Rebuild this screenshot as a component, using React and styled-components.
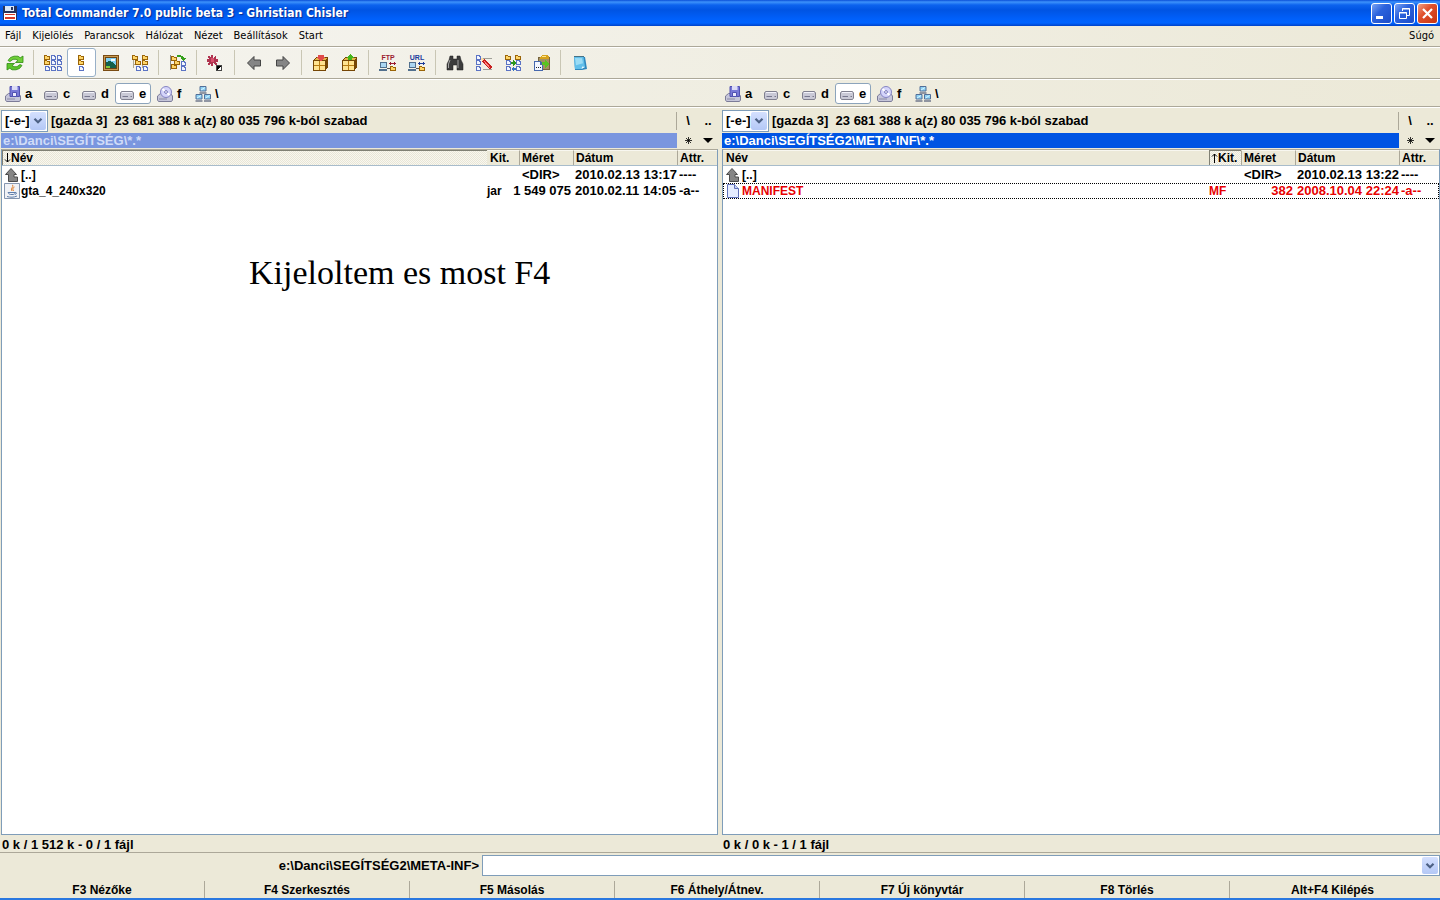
import React from "react";
import styled, { createGlobalStyle } from "styled-components";

const GlobalStyle = createGlobalStyle`
  * {
    box-sizing: border-box;
  }

  body {
    margin: 0;
    background: #ece9d8;
    color: #000;
    font-family: "Liberation Sans", Arial, sans-serif;
    font-size: 13px;
    font-weight: bold;
    line-height: 16px;
  }

  button, input, select {
    margin: 0;
    padding: 0;
    border: 0;
    background: none;
    color: inherit;
    font: inherit;
  }

  svg {
    display: block;
    flex: none;
  }
`;

const Window = styled.div`
  display: flex;
  flex-direction: column;
  min-height: 100vh;
  border-bottom: 2px solid #2a78e0;
`;

const TitleBar = styled.header`
  display: flex;
  align-items: center;
  height: 26px;
  padding: 0 2px;
  background: linear-gradient(
    #0a4fd8 0,
    #3d92fb 2px,
    #0c63ee 5px,
    #0054e3 10px,
    #0060fb 19px,
    #0064ff 23px,
    #0042c8 26px
  );
`;

const Title = styled.h1`
  flex: 1;
  margin: 0 0 0 4px;
  color: #fff;
  font-family: "DejaVu Sans Condensed", "DejaVu Sans", sans-serif;
  font-size: 12px;
  font-weight: bold;
  text-shadow: 1px 1px 1px #0a2a90;
`;

const WindowButtons = styled.div`
  display: flex;
  gap: 2px;
`;

const WindowButton = styled.button`
  width: 21px;
  height: 21px;
  border: 1px solid #fff;
  border-radius: 3px;
  background: ${(props) =>
    props.$close
      ? "linear-gradient(135deg, #f0a084, #e0502c 40%, #c83410)"
      : "linear-gradient(135deg, #7ba4f4, #2c63dd 40%, #1c4cc8)"};
`;

const MenuBar = styled.nav`
  display: flex;
  height: 21px;
  padding: 0 6px 0 5px;
  gap: 11px;
  border-bottom: 1px solid #aca899;
  background: linear-gradient(90deg, #f6f5f1, #ece9d8);
`;

const MenuItem = styled.button`
  font-family: "DejaVu Sans Condensed", "DejaVu Sans", sans-serif;
  font-size: 11px;
  font-weight: normal;
  line-height: 18px;

  &:last-child {
    margin-left: auto;
  }
`;

const ToolBar = styled.div`
  display: flex;
  height: 32px;
  border-top: 1px solid #fff;
  border-bottom: 1px solid #aca899;
  background: linear-gradient(90deg, #f5f4ef, #ece9d8);
`;

const ToolButton = styled.button`
  display: flex;
  align-items: center;
  justify-content: center;
  width: 29px;
  height: 29px;
  border: 1px solid ${(props) => (props.$active ? "#98b0c8" : "transparent")};
  border-radius: 3px;
  background: ${(props) => (props.$active ? "#fff" : "none")};
`;

const Separator = styled.span`
  width: 1px;
  height: 25px;
  margin: 2px 4px;
  background: #c9c6b4;
`;

const DriveBars = styled.div`
  display: flex;
  height: 28px;
  border-top: 1px solid #fff;
  border-bottom: 1px solid #aca899;
  background: linear-gradient(90deg, #f3f2eb, #ece9d8);
`;

const DriveBar = styled.div`
  display: flex;
  flex: 1;
  align-items: center;
  gap: 2px;
  padding: 1px 1px 0;
`;

const DriveButton = styled.button`
  display: flex;
  align-items: center;
  gap: 4px;
  width: 36px;
  height: 21px;
  padding: 0 3px;
  border: 1px solid ${(props) => (props.$active ? "#8ca4bc" : "transparent")};
  border-radius: 3px;
  background: ${(props) => (props.$active ? "#fff" : "none")};
`;

const Panels = styled.main`
  display: grid;
  grid-template-columns: 1fr 1fr;
  flex: 1;
  padding-top: 2px;
  border-top: 1px solid #fff;
`;

const PanelBox = styled.section`
  display: flex;
  flex-direction: column;
  min-width: 0;
  padding: ${(props) => (props.$side === "left" ? "0 2px 0 1px" : "0 0 0 2px")};
`;

const InfoRow = styled.div`
  display: flex;
  align-items: center;
  height: 22px;
`;

const DriveSelect = styled.span`
  position: relative;
  display: flex;
  width: 47px;
  height: 22px;
  margin-right: 3px;
  border: 1px solid #7f9db9;
  background: #fff;

  select {
    width: 100%;
    padding-left: 3px;
    appearance: none;
    outline: none;
  }
`;

const Arrow = styled.span`
  display: flex;
  align-items: center;
  justify-content: center;
  width: 16px;
  border-radius: 2px;
  background: linear-gradient(#d4e0fe, #b4c8f6);

  ${DriveSelect} & {
    position: absolute;
    top: 1px;
    right: 1px;
    bottom: 1px;
    pointer-events: none;
  }
`;

const FreeSpace = styled.span`
  flex: 1;
  white-space: pre;
`;

const SmallButton = styled.button`
  display: flex;
  align-items: center;
  justify-content: center;
  width: 20px;
  height: 18px;
`;

const Divider = styled.span`
  width: 1px;
  height: 18px;
  margin-right: 1px;
  background: #aca899;
`;

const PathRow = styled.div`
  display: flex;
  align-items: center;
  height: 17px;
`;

const Path = styled.div`
  flex: 1;
  height: 15px;
  margin-right: 1px;
  padding-left: 2px;
  background: ${(props) => (props.$active ? "#0054e3" : "#7a96df")};
  color: ${(props) => (props.$active ? "#fff" : "#d0dcf8")};
  line-height: 15px;
`;

const List = styled.div`
  flex: 1;
  border: 1px solid #7f9db9;
  border-top-color: #aca899;
  background: #fff;
`;

const FileTable = styled.table`
  width: 100%;
  border-collapse: collapse;
  table-layout: fixed;

  th, td {
    padding: 0;
    text-align: left;
    white-space: nowrap;
  }

  thead {
    border-bottom: 1px solid #a8bccb;
    background: #ece9d8;
  }

  tbody::before {
    display: block;
    height: 1px;
    content: "";
  }
`;

const Column = styled.col`
  width: ${(props) => props.$width || "auto"};
`;

const HeadButton = styled.button`
  display: flex;
  align-items: center;
  width: 100%;
  height: 15px;
  padding-left: ${(props) => (props.$sorted ? "1px" : "2px")};
  border-left: 1px solid
    ${(props) => (props.$sorted ? "#808074" : props.$line ? "#aca899" : "transparent")};
  border-top: 1px solid ${(props) => (props.$sorted ? "#808074" : "#f8f7f0")};
  background: ${(props) =>
    props.$sorted
      ? "repeating-conic-gradient(#f8f7f0 0 25%, #e9e6d6 0 50%) 0 0 / 2px 2px"
      : "none"};
  font-size: 12px;
`;

const FileRow = styled.tr`
  height: 16px;
  color: ${(props) => (props.$selected ? "#e60000" : "inherit")};
  outline: ${(props) => (props.$selected ? "1px dotted #000" : "none")};
  outline-offset: -1px;
`;

const Name = styled.div`
  display: flex;
  gap: 1px;
  padding-left: 2px;
  font-size: 12px;
`;

const Ext = styled.td`
  font-size: 12px;
`;

const Size = styled.div`
  display: flex;
  justify-content: ${(props) => (props.$folder ? "flex-start" : "flex-end")};
  padding: 0 2px 0 ${(props) => (props.$folder ? "3px" : "0")};
`;

const Padded = styled.td`
  && {
    padding-left: 2px;
  }
`;

const Status = styled.div`
  height: 17px;
  padding: 2px 1px 0;
`;

const Note = styled.p`
  position: absolute;
  top: 253px;
  left: 249px;
  margin: 0;
  font-family: "Liberation Serif", serif;
  font-size: 34px;
  font-weight: normal;
  line-height: 40px;
`;

const CommandRow = styled.form`
  display: grid;
  grid-template-columns: 1fr 2fr;
  gap: 3px;
  align-items: center;
  height: 26px;
  border-top: 1px solid #aca899;

  label {
    text-align: right;
  }
`;

const CommandBox = styled.div`
  display: flex;
  height: 21px;
  padding: 1px;
  border: 1px solid #7f9db9;
  background: #fff;

  input {
    flex: 1;
    outline: none;
  }

  button {
    display: flex;
  }
`;

const FunctionKeys = styled.footer`
  display: grid;
  grid-template-columns: repeat(7, 1fr);
  height: 20px;
  padding: 3px 5px 0 0;
`;

const FunctionKey = styled.button`
  border-right: 1px solid #aca899;
  font-size: 12px;

  &:last-child {
    border-right: 0;
  }
`;

/* pieces shared by the toolbar icons */

const Folder = ({ x, y }) => (
  <g transform={`translate(${x} ${y})`}>
    <path d="M0 0h3v1h3v4H0z" fill="#9a6408" />
    <path d="M1 1h2v1h2v2H1z" fill="#ffd668" />
  </g>
);

const Page = ({ x, y }) => (
  <g transform={`translate(${x} ${y})`}>
    <path d="M0 0h3l2 2v3H0z" fill="#5b73c4" />
    <path d="M1 1h2v1h1v2H1z" fill="#f2f6ff" />
  </g>
);

const Icon = ({ children, size = 18, smooth }) => (
  <svg
    width={size}
    height={size}
    viewBox={`0 0 ${size} ${size}`}
    shapeRendering={smooth ? "auto" : "crispEdges"}
    aria-hidden="true"
  >
    {children}
  </svg>
);

const Chevron = () => (
  <svg width="10" height="8" viewBox="0 0 10 8" aria-hidden="true">
    <path d="M1.5 1.8 5 5.3l3.5-3.5" fill="none" stroke="#4d6185" strokeWidth="2.2" />
  </svg>
);

const RefreshIcon = () => (
  <Icon smooth>
    <path
      d="M2 6.500 4.500 3.500 8 2.200h4l2.200 1.600L17 2v6.500H9.500l2.500-2-2-1.200H7L4 7.500z"
      fill="#6fd038"
      stroke="#2f8a12"
      strokeWidth=".8"
    />
    <path
      d="M16 11.500l-2.500 3L10 15.800H6l-2.200-1.600L1 16V9.500h7.500l-2.500 2 2 1.200h3l3-2.200z"
      fill="#5cc52c"
      stroke="#2f8a12"
      strokeWidth=".8"
    />
  </Icon>
);

const BriefIcon = () => (
  <Icon>
    <Folder x={0} y={1} />
    <Folder x={0} y={6} />
    <Page x={1} y={12} />
    {[7, 13].map((x) => [1, 6, 12].map((y) => <Page key={`${x}-${y}`} x={x} y={y} />))}
  </Icon>
);

const FullIcon = () => (
  <Icon>
    <Folder x={5} y={1} />
    <Folder x={5} y={6} />
    <Page x={6} y={12} />
  </Icon>
);

const ThumbsIcon = () => (
  <Icon>
    <path d="M1 1h16v16H1z" fill="#7a4c14" />
    <path d="M2 2h14v14H2z" fill="#c99a50" />
    <path d="M3 3h12v12H3z" fill="#6b4516" />
    <path d="M4 4h10v10H4z" fill="#7fd0f4" />
    <path d="M4 8l3-1 3 1 4 3v3H4z" fill="#14604c" />
    <path d="M9 5h4v2H9z" fill="#f4fcff" />
    <path d="M4 12h4v2H4z" fill="#7cc83c" />
  </Icon>
);

const TreeIcon = () => (
  <Icon>
    <path d="M2 5h1v9H2zM3 10h3v1H3zM11 5h1v9h-1zM12 13h2v1h-2z" fill="#b0a890" />
    <Folder x={1} y={1} />
    <Folder x={4} y={6} />
    <Folder x={11} y={1} />
    <Folder x={11} y={6} />
    <Page x={5} y={12} />
    <Page x={12} y={12} />
  </Icon>
);

const BranchIcon = () => (
  <Icon>
    <path d="M1 1h1v15H1z" fill="#8c8c84" />
    <Folder x={2} y={2} />
    <Folder x={5} y={6} />
    <Folder x={2} y={10} />
    <Page x={12} y={7} />
    <Page x={12} y={12} />
    <path d="M8 1h4v1h2v1h1v1h2l-3 3-3-3h1V3H8z" fill="#34a01c" />
  </Icon>
);

const InvertIcon = () => (
  <Icon>
    <path
      d="M4 1h2v3l2-2h1v2L8 5h3v3H8l2 2v1H8L6 9v3H4V9l-2 2H1V9l1-1H0V5h2L1 3V2h1l2 2z"
      fill="#b03450"
    />
    <path d="M4 4h3v4H4z" fill="#d8506c" />
    <path d="M9 11h6v6H9z" fill="#444" />
    <path d="M10 12h4v4h-4z" fill="#000" />
    <path d="M14 12v4h-4z" fill="#fff" />
  </Icon>
);

const ArrowIcon = ({ right }) => (
  <Icon smooth>
    <path
      d="M2.500 9 9 2.500V6h6.500v6H9v3.500z"
      fill="#858585"
      stroke="#454545"
      transform={right ? "translate(18 0) scale(-1 1)" : undefined}
    />
  </Icon>
);

const PackIcon = ({ unpack }) => (
  <Icon>
    <path d="M1 6l3-3h12v10l-2 3v1H1z" fill="#754606" />
    <path d="M4 4h11l-2 2H3z" fill="#e2b449" />
    <path d="M2 7h5v4H2zM8 7h5v4H8zM2 12h5v4H2zM8 12h5v4H8z" fill="#ffe390" />
    <path d="M7 7h1v9H7zM2 11h11v1H2z" fill="#b77c12" />
    {unpack ? (
      <path d="M9 0l4 4h-2v2H7V4H5z" fill="#45b51a" />
    ) : (
      <path d="M6 1h6v2h2l-5 4-5-4h2z" fill="#e14a4a" />
    )}
  </Icon>
);

const NetIcon = ({ label }) => (
  <Icon>
    <text
      x="9"
      y="6"
      textAnchor="middle"
      fontSize="7"
      fontWeight="bold"
      fill={label === "FTP" ? "#9c1c30" : "#1c3c9c"}
    >
      {label}
    </text>
    <path d="M1 8h7v6H1zM0 15h8v2H0z" fill="#52708e" />
    <path d="M2 9h5v4H2z" fill="#abd6f2" />
    <path d="M8 14h3v1H8z" fill="#545454" />
    <path d="M10 9h7v1h-7zM11 8h1v3h-1zM15 8h1v3h-1z" fill={label === "FTP" ? "#9c1c30" : "#1c3c9c"} />
    <Folder x={11} y={12} />
  </Icon>
);

const SearchIcon = () => (
  <Icon smooth>
    <path
      d="M4 2h3v3h4V2h3l1 4 2 4v6h-6v-5H7v5H1v-6l2-4z"
      fill="#3c3c3c"
      stroke="#1e1e1e"
      strokeWidth=".5"
    />
    <path d="M4 6 2.500 10v4M12 6v8" stroke="#a5a5a5" fill="none" />
  </Icon>
);

const RenameIcon = () => (
  <Icon>
    <Page x={1} y={1} />
    <Page x={1} y={6} />
    <Page x={1} y={12} />
    <path d="M8 4h9v1H8zM8 15h9v1H8z" fill="#a0a098" />
    <path d="M6 4l3 1 8 8-2 3-8-8z" fill="#c81e1e" />
    <path d="M6 4l3 1-2 3z" fill="#ffd8a0" />
    <path d="M9 7l6 7" stroke="#ff8880" />
  </Icon>
);

const SyncIcon = () => (
  <Icon>
    <Folder x={1} y={1} />
    <Folder x={11} y={1} />
    <Page x={2} y={6} />
    <Page x={12} y={6} />
    <Page x={2} y={12} />
    <Page x={12} y={12} />
    <path d="M7 8h2V6l3 3-3 3v-2H7z" fill="#2c961c" />
    <path d="M12 14h-2v-2l-3 3 3 3v-2h2z" fill="#3674c4" />
  </Icon>
);

const CopyNamesIcon = () => (
  <Icon>
    <path d="M5 3h12v13H5z" fill="#77643c" />
    <path d="M6 4h10v11H6z" fill="#a49161" />
    <path d="M7 3l2-2h5l2 2v2H7z" fill="#d6a21c" />
    <path d="M9 2h4v1H9z" fill="#ffe78c" />
    <path d="M1 7h6l3 3v7H1z" fill="#4668ae" />
    <path d="M2 8h5v3h2v5H2z" fill="#f2f6ff" />
    <path d="M3 13h1v1H3zM5 13h1v1H5zM7 13h1v1H7z" fill="#222" />
    <path d="M9 8h3V6l4 4-4 4v-3H9z" fill="#5ac321" />
  </Icon>
);

const NotepadIcon = () => (
  <Icon smooth>
    <path d="M3 2.500 14 3l2 12-5 1H4z" fill="#2e86bd" />
    <path d="M3 2.500 12.500 3 14 13l-3.500 2H4z" fill="#62bfea" />
    <path d="M4 4l7 .2 1 5-7 2z" fill="#9bdcf5" />
    <path d="M3 2.500h10" stroke="#477285" />
    <path d="M10.500 15l3.500-2-2.800-.5z" fill="#e8f8ff" />
  </Icon>
);

const DiskIcon = () => (
  <Icon size={16}>
    <path d="M1 1h13l1 1v13H1z" fill="#28345c" />
    <path d="M3 1h9v5H3z" fill="#dce8f8" />
    <path d="M9 2h2v3H9z" fill="#28345c" />
    <path d="M2 8h12v7H2z" fill="#fff" />
    <path d="M3 9h10v1H3zM3 12h10v2H3z" fill="#d83828" />
  </Icon>
);

const Drive = () => (
  <>
    <path d="M2.500 5.500h11l1 1.500v5l-1 1.500h-11l-1-1.500V7z" fill="#c9c9d6" stroke="#80808f" />
    <path d="M3 6.500h10" stroke="#f2f2fa" />
    <path d="M3.500 10.500H9" stroke="#77778e" />
    <path d="M11.500 10h1.500v1h-1.500z" fill="#7a7a8a" />
  </>
);

const LowDrive = () => (
  <>
    <path d="M3.500 7.500h10l2 2.500v4l-1 1.500h-13L.5 14v-4z" fill="#c6c6da" stroke="#7c7c98" />
    <path d="M2 13h8" stroke="#8a8aa4" />
  </>
);

const Monitor = ({ x, y }) => (
  <g transform={`translate(${x} ${y})`}>
    <path d="M0 0h6v4.500H0z" fill="#8cd2f5" stroke="#526f98" />
    <path d="M1 3.500l4-2.500" stroke="#d8f4ff" />
    <path d="M-.5 6.500h7" stroke="#70788c" strokeWidth="1.500" />
  </g>
);

const DriveIcon = ({ type }) => (
  <Icon size={16} smooth>
    {type === "disk" && <Drive />}
    {(type === "floppy" || type === "cd") && <LowDrive />}
    {type === "floppy" && (
      <>
        <path d="M5 .5h9.500v10H5z" fill="#7878d6" stroke="#5050b0" />
        <path d="M7 0h5.500v4H7z" fill="#dcdcf6" />
        <path d="M7.500 6.500h4v4h-4z" fill="#eceafe" stroke="#5050b0" />
      </>
    )}
    {type === "cd" && (
      <>
        <circle cx="9" cy="6" r="5.500" fill="#d4d4fa" stroke="#8484c2" />
        <path d="M9 6 5.500 3M9 6l3.500 3" stroke="#fff" strokeWidth="2" />
        <circle cx="9" cy="6" r="1.400" fill="#fff" stroke="#7474b8" />
      </>
    )}
    {type === "network" && (
      <>
        <Monitor x={5} y={0.5} />
        <Monitor x={1} y={8.5} />
        <Monitor x={9.5} y={8.5} />
      </>
    )}
  </Icon>
);

const FileIcon = ({ type }) => (
  <Icon size={16} smooth>
    {type === "up" && (
      <path d="M7 1.500 12.500 7.500H10V10h3.500v4.500H4.500v-7H1.500z" fill="#858585" stroke="#4c4c4c" />
    )}
    {type === "jar" && (
      <>
        <path d="M.5.5h15v15H.5z" fill="#f0f2f6" stroke="#8495ae" />
        <path d="M8 2c3 1-2 3 0 6M10.500 4c-2 1-2 2-1 4" fill="none" stroke="#df7b24" />
        <path d="M4 9.500h7c0 2-1 2-3 2s-3 0-4-2zM11 9.500c2-.5 2 1.500 0 2M3 13.500c3 1 7 1 10-.5" fill="none" stroke="#607eaa" />
      </>
    )}
    {type === "page" && (
      <>
        <path d="M2.500 1.500h7l4 4v9h-11z" fill="#e6edff" stroke="#6070b8" />
        <path d="M9.500 1.500v4h4" fill="#c5d2f4" stroke="#6070b8" />
      </>
    )}
  </Icon>
);

const menu = ["Fájl", "Kijelölés", "Parancsok", "Hálózat", "Nézet", "Beállítások", "Start", "Súgó"];

const tools = [
  [{ label: "Frissítés", icon: <RefreshIcon /> }],
  [
    { label: "Rövid", icon: <BriefIcon /> },
    { label: "Teljes", icon: <FullIcon />, active: true },
    { label: "Miniatűrök", icon: <ThumbsIcon /> },
    { label: "Fa", icon: <TreeIcon /> },
  ],
  [{ label: "Alkönyvtárak", icon: <BranchIcon /> }],
  [{ label: "Kijelölés megfordítása", icon: <InvertIcon /> }],
  [
    { label: "Vissza", icon: <ArrowIcon /> },
    { label: "Előre", icon: <ArrowIcon right /> },
  ],
  [
    { label: "Becsomagolás", icon: <PackIcon /> },
    { label: "Kicsomagolás", icon: <PackIcon unpack /> },
  ],
  [
    { label: "FTP kapcsolat", icon: <NetIcon label="FTP" /> },
    { label: "URL kapcsolat", icon: <NetIcon label="URL" /> },
  ],
  [
    { label: "Keresés", icon: <SearchIcon /> },
    { label: "Csoportos átnevezés", icon: <RenameIcon /> },
    { label: "Szinkronizálás", icon: <SyncIcon /> },
    { label: "Nevek másolása", icon: <CopyNamesIcon /> },
  ],
  [{ label: "Jegyzettömb", icon: <NotepadIcon /> }],
];

const drives = [
  { name: "a", type: "floppy" },
  { name: "c", type: "disk" },
  { name: "d", type: "disk" },
  { name: "e", type: "disk" },
  { name: "f", type: "cd" },
  { name: "\\", type: "network" },
];

const leftFiles = [
  { name: "[..]", icon: "up", size: "<DIR>", folder: true, date: "2010.02.13 13:17", attr: "----" },
  { name: "gta_4_240x320", icon: "jar", ext: "jar", size: "1 549 075", date: "2010.02.11 14:05", attr: "-a--" },
];

const rightFiles = [
  { name: "[..]", icon: "up", size: "<DIR>", folder: true, date: "2010.02.13 13:22", attr: "----" },
  { name: "MANIFEST", icon: "page", ext: "MF", size: "382", date: "2008.10.04 22:24", attr: "-a--", selected: true },
];

const functionKeys = [
  "F3 Nézőke",
  "F4 Szerkesztés",
  "F5 Másolás",
  "F6 Áthely/Átnev.",
  "F7 Új könyvtár",
  "F8 Törlés",
  "Alt+F4 Kilépés",
];

function Drives() {
  return (
    <DriveBar>
      {drives.map((drive) => (
        <DriveButton key={drive.name} $active={drive.name === "e"}>
          <DriveIcon type={drive.type} />
          {drive.name}
        </DriveButton>
      ))}
    </DriveBar>
  );
}

function Panel({ side, path, active, sort, files, status }) {
  const head = [
    { key: "name", label: "Név" },
    { key: "ext", label: "Kit." },
    { key: "size", label: "Méret", line: true },
    { key: "date", label: "Dátum", line: true },
    { key: "attr", label: "Attr.", line: true },
  ];

  return (
    <PanelBox $side={side}>
      <InfoRow>
        <DriveSelect>
          <select aria-label="Meghajtó" defaultValue="e">
            <option value="e">[-e-]</option>
          </select>
          <Arrow>
            <Chevron />
          </Arrow>
        </DriveSelect>
        <FreeSpace>{"[gazda 3]  23 681 388 k a(z) 80 035 796 k-ból szabad"}</FreeSpace>
        <Divider />
        <SmallButton>\</SmallButton>
        <SmallButton>..</SmallButton>
      </InfoRow>
      <PathRow>
        <Path $active={active}>{path}</Path>
        <SmallButton aria-label="Kedvencek">
          <svg width="7" height="7" viewBox="0 0 7 7">
            <path d="M3.500 0v7M0 3.500h7M1 1l5 5M6 1 1 6" stroke="#000" strokeWidth=".8" />
          </svg>
        </SmallButton>
        <SmallButton aria-label="Előzmények">
          <svg width="10" height="5" viewBox="0 0 10 5">
            <path d="M0 0h10L5 5z" />
          </svg>
        </SmallButton>
      </PathRow>
      <List>
        <FileTable>
          <colgroup>
            <Column />
            <Column $width="32px" />
            <Column $width="54px" />
            <Column $width="104px" />
            <Column $width="40px" />
          </colgroup>
          <thead>
            <tr>
              {head.map((col) => (
                <th key={col.key}>
                  <HeadButton $line={col.line} $sorted={sort.key === col.key}>
                    {sort.key === col.key && (
                      <svg width="7" height="10" viewBox="0 0 7 10">
                        <path
                          d={sort.up ? "M3.500 10V1M1 3.500 3.500 1 6 3.500" : "M3.500 0v9M1 6.500 3.500 9 6 6.500"}
                          fill="none"
                          stroke="#000"
                        />
                      </svg>
                    )}
                    {col.label}
                  </HeadButton>
                </th>
              ))}
            </tr>
          </thead>
          <tbody>
            {files.map((file) => (
              <FileRow key={file.name} $selected={file.selected}>
                <td>
                  <Name>
                    <FileIcon type={file.icon} />
                    {file.name}
                  </Name>
                </td>
                <Ext>{file.ext}</Ext>
                <td>
                  <Size $folder={file.folder}>
                    <span>{file.size}</span>
                  </Size>
                </td>
                <Padded>{file.date}</Padded>
                <Padded>{file.attr}</Padded>
              </FileRow>
            ))}
          </tbody>
        </FileTable>
      </List>
      <Status>{status}</Status>
    </PanelBox>
  );
}

function App() {
  return (
    <Window>
      <GlobalStyle />
      <TitleBar>
        <DiskIcon />
        <Title>Total Commander 7.0 public beta 3 - Ghristian Chisler</Title>
        <WindowButtons>
          <WindowButton aria-label="Kis méret">
            <svg width="19" height="19" viewBox="0 0 19 19">
              <path d="M4 12h7v3H4z" fill="#fff" />
            </svg>
          </WindowButton>
          <WindowButton aria-label="Előző méret">
            <svg width="19" height="19" viewBox="0 0 19 19" fill="none" stroke="#fff">
              <path d="M7.500 7V4.500h7v7H12M7 5h8M4.500 8.500h7v6h-7zM4 9h8" />
            </svg>
          </WindowButton>
          <WindowButton $close aria-label="Bezárás">
            <svg width="19" height="19" viewBox="0 0 19 19">
              <path d="M5 5l9 9M14 5l-9 9" stroke="#fff" strokeWidth="2.200" />
            </svg>
          </WindowButton>
        </WindowButtons>
      </TitleBar>
      <MenuBar>
        {menu.map((item) => (
          <MenuItem key={item}>{item}</MenuItem>
        ))}
      </MenuBar>
      <ToolBar>
        {tools.map((group, i) => (
          <React.Fragment key={i}>
            {i > 0 && <Separator />}
            {group.map((tool) => (
              <ToolButton key={tool.label} $active={tool.active} aria-label={tool.label}>
                {tool.icon}
              </ToolButton>
            ))}
          </React.Fragment>
        ))}
      </ToolBar>
      <DriveBars>
        <Drives />
        <Drives />
      </DriveBars>
      <Panels>
        <Panel
          side="left"
          path={"e:\\Danci\\SEGÍTSÉG\\*.*"}
          sort={{ key: "name" }}
          files={leftFiles}
          status="0 k / 1 512 k - 0 / 1 fájl"
        />
        <Panel
          side="right"
          active
          path={"e:\\Danci\\SEGÍTSÉG2\\META-INF\\*.*"}
          sort={{ key: "ext", up: true }}
          files={rightFiles}
          status="0 k / 0 k - 1 / 1 fájl"
        />
      </Panels>
      <Note>Kijeloltem es most F4</Note>
      <CommandRow onSubmit={(e) => e.preventDefault()}>
        <label htmlFor="command">{"e:\\Danci\\SEGÍTSÉG2\\META-INF>"}</label>
        <CommandBox>
          <input id="command" type="text" />
          <button type="button" aria-label="Korábbi parancsok">
            <Arrow>
              <Chevron />
            </Arrow>
          </button>
        </CommandBox>
      </CommandRow>
      <FunctionKeys>
        {functionKeys.map((key) => (
          <FunctionKey key={key}>{key}</FunctionKey>
        ))}
      </FunctionKeys>
    </Window>
  );
}

export default App;
